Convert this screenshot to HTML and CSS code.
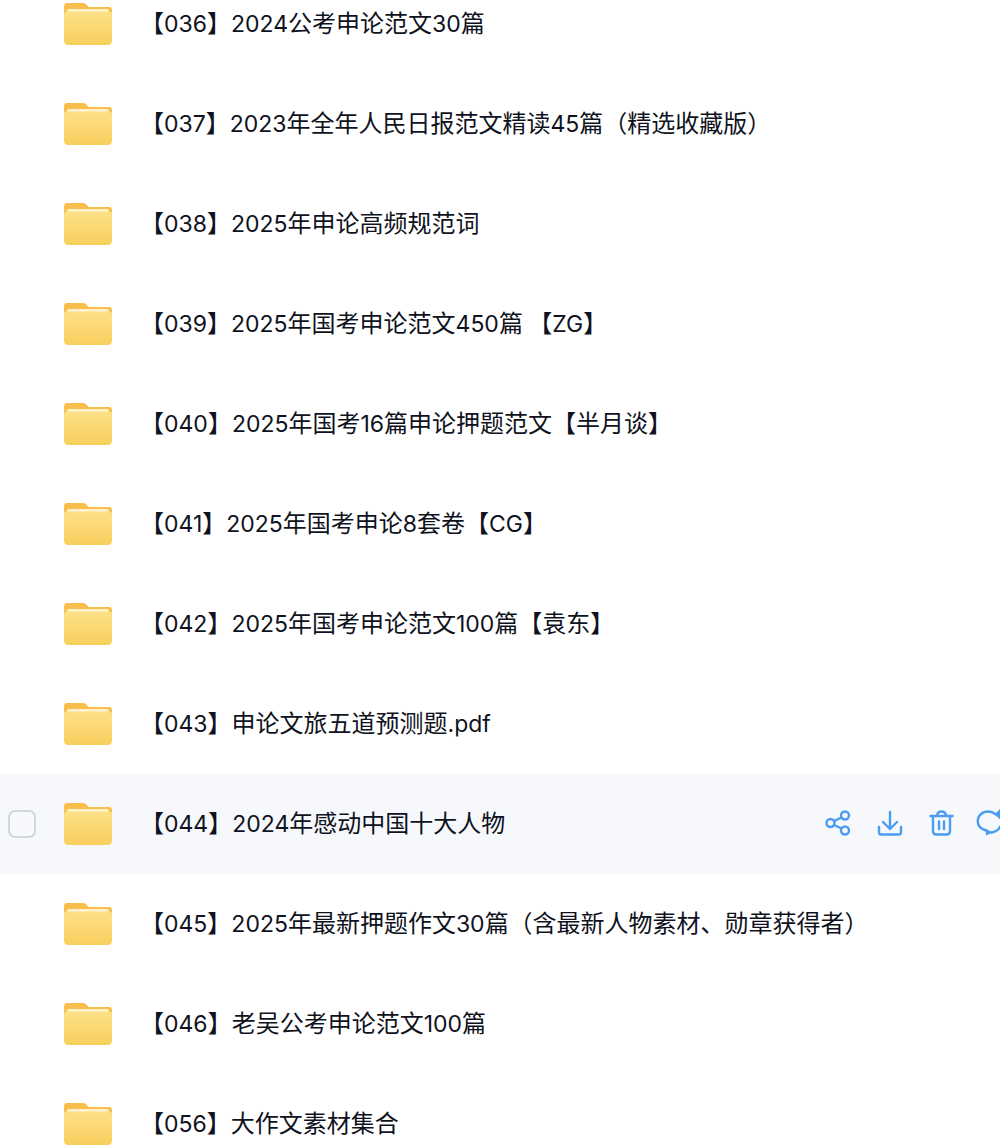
FILE: index.html
```html
<!DOCTYPE html>
<html lang="zh-CN">
<head>
    <meta charset="UTF-8">
    <title>文件列表</title>
    <link rel="stylesheet" href="styles.css">
</head>
<body>
    <svg class="defs" width="0" height="0">
        <defs>
            <linearGradient id="folderFront" x1="0" y1="0" x2="0" y2="1">
                <stop offset="0" stop-color="#fde187"/>
                <stop offset="1" stop-color="#f9cf5e"/>
            </linearGradient>
            <symbol id="folder" viewBox="0 0 48 42">
                <path d="M3 0h16c1.500 0 2.500.5 3.500 1.700L25 4h20c1.700 0 3 1.300 3 3v8H0V3c0-1.700 1.300-3 3-3z" fill="#f9bf4e"/>
                <rect x="3" y="6" width="42" height="8" rx="2" fill="#fdf0cc"/>
                <path d="M0 11.500c0-1.700 1.300-3 3-3h42c1.700 0 3 1.300 3 3V38c0 2.200-1.800 4-4 4H4c-2.200 0-4-1.800-4-4z" fill="url(#folderFront)"/>
            </symbol>
        </defs>
    </svg>

    <div class="list">
        <div class="row">
            <svg class="folder"><use href="#folder"/></svg>
            <span class="name">【<i>036</i>】<i>2024</i>公考申论范文<i>30</i>篇</span>
        </div>
        <div class="row">
            <svg class="folder"><use href="#folder"/></svg>
            <span class="name">【<i>037</i>】<i>2023</i>年全年人民日报范文精读<i>45</i>篇（精选收藏版）</span>
        </div>
        <div class="row">
            <svg class="folder"><use href="#folder"/></svg>
            <span class="name">【<i>038</i>】<i>2025</i>年申论高频规范词</span>
        </div>
        <div class="row">
            <svg class="folder"><use href="#folder"/></svg>
            <span class="name">【<i>039</i>】<i>2025</i>年国考申论范文<i>450</i>篇 【<i>ZG</i>】</span>
        </div>
        <div class="row">
            <svg class="folder"><use href="#folder"/></svg>
            <span class="name">【<i>040</i>】<i>2025</i>年国考<i>16</i>篇申论押题范文【半月谈】</span>
        </div>
        <div class="row">
            <svg class="folder"><use href="#folder"/></svg>
            <span class="name">【<i>041</i>】<i>2025</i>年国考申论<i>8</i>套卷【<i>CG</i>】</span>
        </div>
        <div class="row">
            <svg class="folder"><use href="#folder"/></svg>
            <span class="name">【<i>042</i>】<i>2025</i>年国考申论范文<i>100</i>篇【袁东】</span>
        </div>
        <div class="row">
            <svg class="folder"><use href="#folder"/></svg>
            <span class="name">【<i>043</i>】申论文旅五道预测题<i>.pdf</i></span>
        </div>
        <div class="row hover">
            <span class="check"></span>
            <svg class="folder"><use href="#folder"/></svg>
            <span class="name">【<i>044</i>】<i>2024</i>年感动中国十大人物</span>
            <div class="actions">
                <svg class="act" viewBox="0 0 26 26">
                    <circle cx="5.500" cy="13" r="4"/>
                    <circle cx="20" cy="5.500" r="4"/>
                    <circle cx="20" cy="20.500" r="4"/>
                    <path d="M9 11l7.500-3.500M9 15l7.500 3.500"/>
                </svg>
                <svg class="act" viewBox="0 0 26 26">
                    <path d="M13 2v17M6 12l7 7 7-7"/>
                    <path d="M2 17v5c0 1.400.8 2.500 2 2.500h18c1.200 0 2-1.100 2-2.500v-5"/>
                </svg>
                <svg class="act" viewBox="0 0 26 26">
                    <path d="M1.500 6h22M8 5.500C8.500 2.500 10 1.500 12.500 1.500s4 1 4.500 4"/>
                    <path d="M4 6.500V21c0 2 1.300 3.500 3.500 3.500h10c2.200 0 3.500-1.500 3.500-3.500V6.500"/>
                    <path d="M10 11.500v7.500M15 11.500v7.500"/>
                </svg>
                <svg class="act last" viewBox="0 0 26 26">
                    <path d="M19 4C17 2.300 15 1.500 12.500 1.500 6 1.500 1.700 5.800 1.700 11c0 4.500 3.300 8 8.300 9.500"/>
                    <path class="solid" d="M18.500 4.500L25 -2v12z"/>
                    <path class="solid" d="M9.500 18.500l7 4-6.500 3z"/>
                    <path d="M15 22.500c4.500-.5 8-3 10-7"/>
                </svg>
            </div>
        </div>
        <div class="row">
            <svg class="folder"><use href="#folder"/></svg>
            <span class="name">【<i>045</i>】<i>2025</i>年最新押题作文<i>30</i>篇（含最新人物素材、勋章获得者）</span>
        </div>
        <div class="row">
            <svg class="folder"><use href="#folder"/></svg>
            <span class="name">【<i>046</i>】老吴公考申论范文<i>100</i>篇</span>
        </div>
        <div class="row">
            <svg class="folder"><use href="#folder"/></svg>
            <span class="name">【<i>056</i>】大作文素材集合</span>
        </div>
    </div>
</body>
</html>
```

FILE: styles.css
```css
html, body {
    margin: 0;
    height: 1146px;
    overflow: hidden;
    background: #fff;
}

.defs {
    display: block;
    height: 0;
}

.list {
    margin-top: -26px;
    font-family: "Noto Sans CJK SC", sans-serif;
    color: #0f1220;
}

.row {
    height: 100px;
    display: flex;
    align-items: center;
    padding-left: 64px;
    position: relative;
    white-space: nowrap;
}

.hover {
    background: #f6f8fc;
}

.check {
    position: absolute;
    left: 8px;
    top: 36px;
    width: 24px;
    height: 24px;
    border: 2px solid #d3d6dc;
    border-radius: 7px;
}

.folder {
    width: 48px;
    height: 42px;
    flex: none;
}

.name {
    margin-left: 28px;
    padding-bottom: 5px;
    font-size: 24px;
}

/* latin runs are a touch smaller than the cjk around them */
.name i {
    font-family: "Inter", sans-serif;
    font-style: normal;
    font-size: 23px;
}

.actions {
    position: absolute;
    left: 825px;
    top: 36px;
    display: flex;
    gap: 26px;
}

.act {
    width: 26px;
    height: 26px;
    flex: none;
    fill: none;
    stroke: #4a9df0;
    stroke-width: 2.400;
    stroke-linecap: round;
    stroke-linejoin: round;
    overflow: visible;
}

.act.last {
    margin-left: -5px;
}

.act .solid {
    fill: #4a9df0;
    stroke: none;
}
```
